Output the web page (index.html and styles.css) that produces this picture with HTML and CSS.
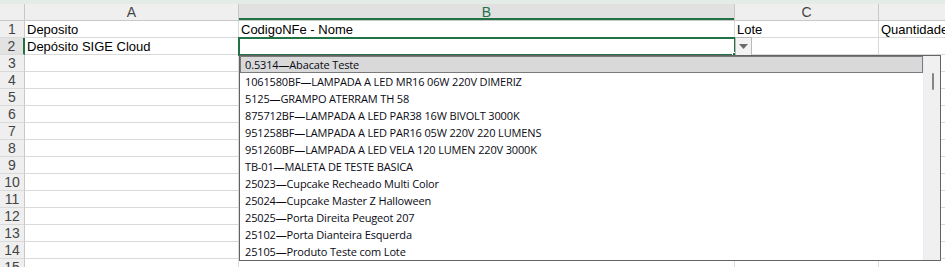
FILE: index.html
```html
<!DOCTYPE html>
<html>
<head>
<meta charset="utf-8">
<link rel="stylesheet" href="styles.css">
</head>
<body>
<div class="sheet">
  <div class="band"></div>
  <div class="row head">
    <div class="rn corner"></div>
    <div class="c a">A</div>
    <div class="c b sel">B</div>
    <div class="c cc">C</div>
    <div class="c d"></div>
  </div>
  <div class="row"><div class="rn">1</div><div class="c a">Deposito</div><div class="c b">CodigoNFe - Nome</div><div class="c cc">Lote</div><div class="c d">Quantidade</div></div>
  <div class="row"><div class="rn rsel">2</div><div class="c a">Depósito SIGE Cloud</div><div class="c b"></div><div class="c cc"></div><div class="c d"></div></div>
  <div class="row"><div class="rn">3</div><div class="c a"></div><div class="c b"></div><div class="c cc"></div><div class="c d"></div></div>
  <div class="row"><div class="rn">4</div><div class="c a"></div><div class="c b"></div><div class="c cc"></div><div class="c d"></div></div>
  <div class="row"><div class="rn">5</div><div class="c a"></div><div class="c b"></div><div class="c cc"></div><div class="c d"></div></div>
  <div class="row"><div class="rn">6</div><div class="c a"></div><div class="c b"></div><div class="c cc"></div><div class="c d"></div></div>
  <div class="row"><div class="rn">7</div><div class="c a"></div><div class="c b"></div><div class="c cc"></div><div class="c d"></div></div>
  <div class="row"><div class="rn">8</div><div class="c a"></div><div class="c b"></div><div class="c cc"></div><div class="c d"></div></div>
  <div class="row"><div class="rn">9</div><div class="c a"></div><div class="c b"></div><div class="c cc"></div><div class="c d"></div></div>
  <div class="row"><div class="rn">10</div><div class="c a"></div><div class="c b"></div><div class="c cc"></div><div class="c d"></div></div>
  <div class="row"><div class="rn">11</div><div class="c a"></div><div class="c b"></div><div class="c cc"></div><div class="c d"></div></div>
  <div class="row"><div class="rn">12</div><div class="c a"></div><div class="c b"></div><div class="c cc"></div><div class="c d"></div></div>
  <div class="row"><div class="rn">13</div><div class="c a"></div><div class="c b"></div><div class="c cc"></div><div class="c d"></div></div>
  <div class="row"><div class="rn">14</div><div class="c a"></div><div class="c b"></div><div class="c cc"></div><div class="c d"></div></div>
  <div class="row"><div class="rn">15</div><div class="c a"></div><div class="c b"></div><div class="c cc"></div><div class="c d"></div></div>

  <div class="selbox"><div class="handle"></div></div>
  <div class="ddbtn"><svg width="9" height="5" viewBox="0 0 9 5"><path d="M0 0h9L4.5 5z" fill="#6b6b6b"/></svg></div>

  <div class="list">
    <div class="items">
      <div class="it hi">0.5314—Abacate Teste</div>
      <div class="it">1061580BF—LAMPADA A LED MR16 06W 220V DIMERIZ</div>
      <div class="it">5125—GRAMPO ATERRAM TH 58</div>
      <div class="it">875712BF—LAMPADA A LED PAR38 16W BIVOLT 3000K</div>
      <div class="it">951258BF—LAMPADA A LED PAR16 05W 220V 220 LUMENS</div>
      <div class="it">951260BF—LAMPADA A LED VELA 120 LUMEN 220V 3000K</div>
      <div class="it">TB-01—MALETA DE TESTE BASICA</div>
      <div class="it">25023—Cupcake Recheado Multi Color</div>
      <div class="it">25024—Cupcake Master Z Halloween</div>
      <div class="it">25025—Porta Direita Peugeot 207</div>
      <div class="it">25102—Porta Dianteira Esquerda</div>
      <div class="it">25105—Produto Teste com Lote</div>
    </div>
    <div class="sbar"><div class="thumb"></div></div>
  </div>
</div>
</body>
</html>
```
FILE: styles.css
```css
html, body {
  margin: 0;
  padding: 0;
  background: #ffffff;
  overflow: hidden;
}
.sheet {
  position: relative;
  width: 945px;
  height: 267px;
  font-family: "Liberation Sans", Arial, sans-serif;
  font-size: 13px;
  color: #000;
}
.band {
  height: 4px;
  background: #e4ece7;
}
.row {
  display: flex;
  height: 16px;
  border-bottom: 1px solid #d9d9d9;
}
.row.head {
  background: #efefef;
  border-bottom: 1px solid #c8c8c8;
}
.rn {
  width: 24px;
  flex: none;
  background: #efefef;
  border-right: 1px solid #c8c8c8;
  color: #444;
  font-size: 14px;
  line-height: 17px;
  text-align: center;
  box-sizing: content-box;
  margin-bottom: -1px;
  border-bottom: 1px solid #dadada;
}
.rn.corner {
  border-bottom: none;
  margin-bottom: 0;
}
.rn.rsel {
  background: #e2e2e2;
  border-right: 2px solid #217346;
  width: 23px;
}
.c {
  flex: none;
  border-right: 1px solid #d9d9d9;
  padding-left: 2px;
  line-height: 17px;
  white-space: nowrap;
  overflow: hidden;
  box-sizing: border-box;
}
.head .c {
  text-align: center;
  color: #444;
  font-size: 14px;
  padding-left: 0;
  border-right: 1px solid #c8c8c8;
  line-height: 16px;
}
.head .c.sel {
  background: #e1e1e1;
  color: #217346;
  box-shadow: inset 0 -2px 0 #217346;
}
.a { width: 214px; }
.b { width: 496px; }
.cc { width: 144px; }
.d { width: 70px; border-right: none; }

.selbox {
  position: absolute;
  left: 238px;
  top: 37px;
  width: 494px;
  height: 15px;
  border: 2px solid #217346;
}
.handle {
  position: absolute;
  right: -4px;
  bottom: -4px;
  width: 4px;
  height: 4px;
  background: #217346;
  border: 1px solid #fff;
}
.ddbtn {
  position: absolute;
  left: 735px;
  top: 37px;
  width: 15px;
  height: 17px;
  background: #f3f3f3;
  border: 1px solid #b9b9b9;
  display: flex;
  align-items: center;
  justify-content: center;
}
.list {
  position: absolute;
  left: 239px;
  top: 55px;
  width: 700px;
  height: 204px;
  border: 1px solid #646464;
  background: #fff;
  display: flex;
}
.items {
  flex: 1;
  font-family: "Open Sans", "Noto Sans", sans-serif;
  font-size: 11px;
  letter-spacing: -0.15px;
  color: #0a0a14;
}
.it {
  height: 17px;
  line-height: 17px;
  padding-left: 5px;
  white-space: nowrap;
  box-sizing: border-box;
}
.it.hi {
  background: #d9d9d9;
  border: 1px solid #7a7a7a;
  padding-left: 4px;
  line-height: 15px;
}
.sbar {
  width: 16px;
  flex: none;
  background: #f0f0f0;
  border-left: 1px solid #e3eef8;
  position: relative;
}
.thumb {
  position: absolute;
  left: 8px;
  top: 17px;
  width: 2px;
  height: 17px;
  background: #858585;
  border-radius: 1px;
}
```
